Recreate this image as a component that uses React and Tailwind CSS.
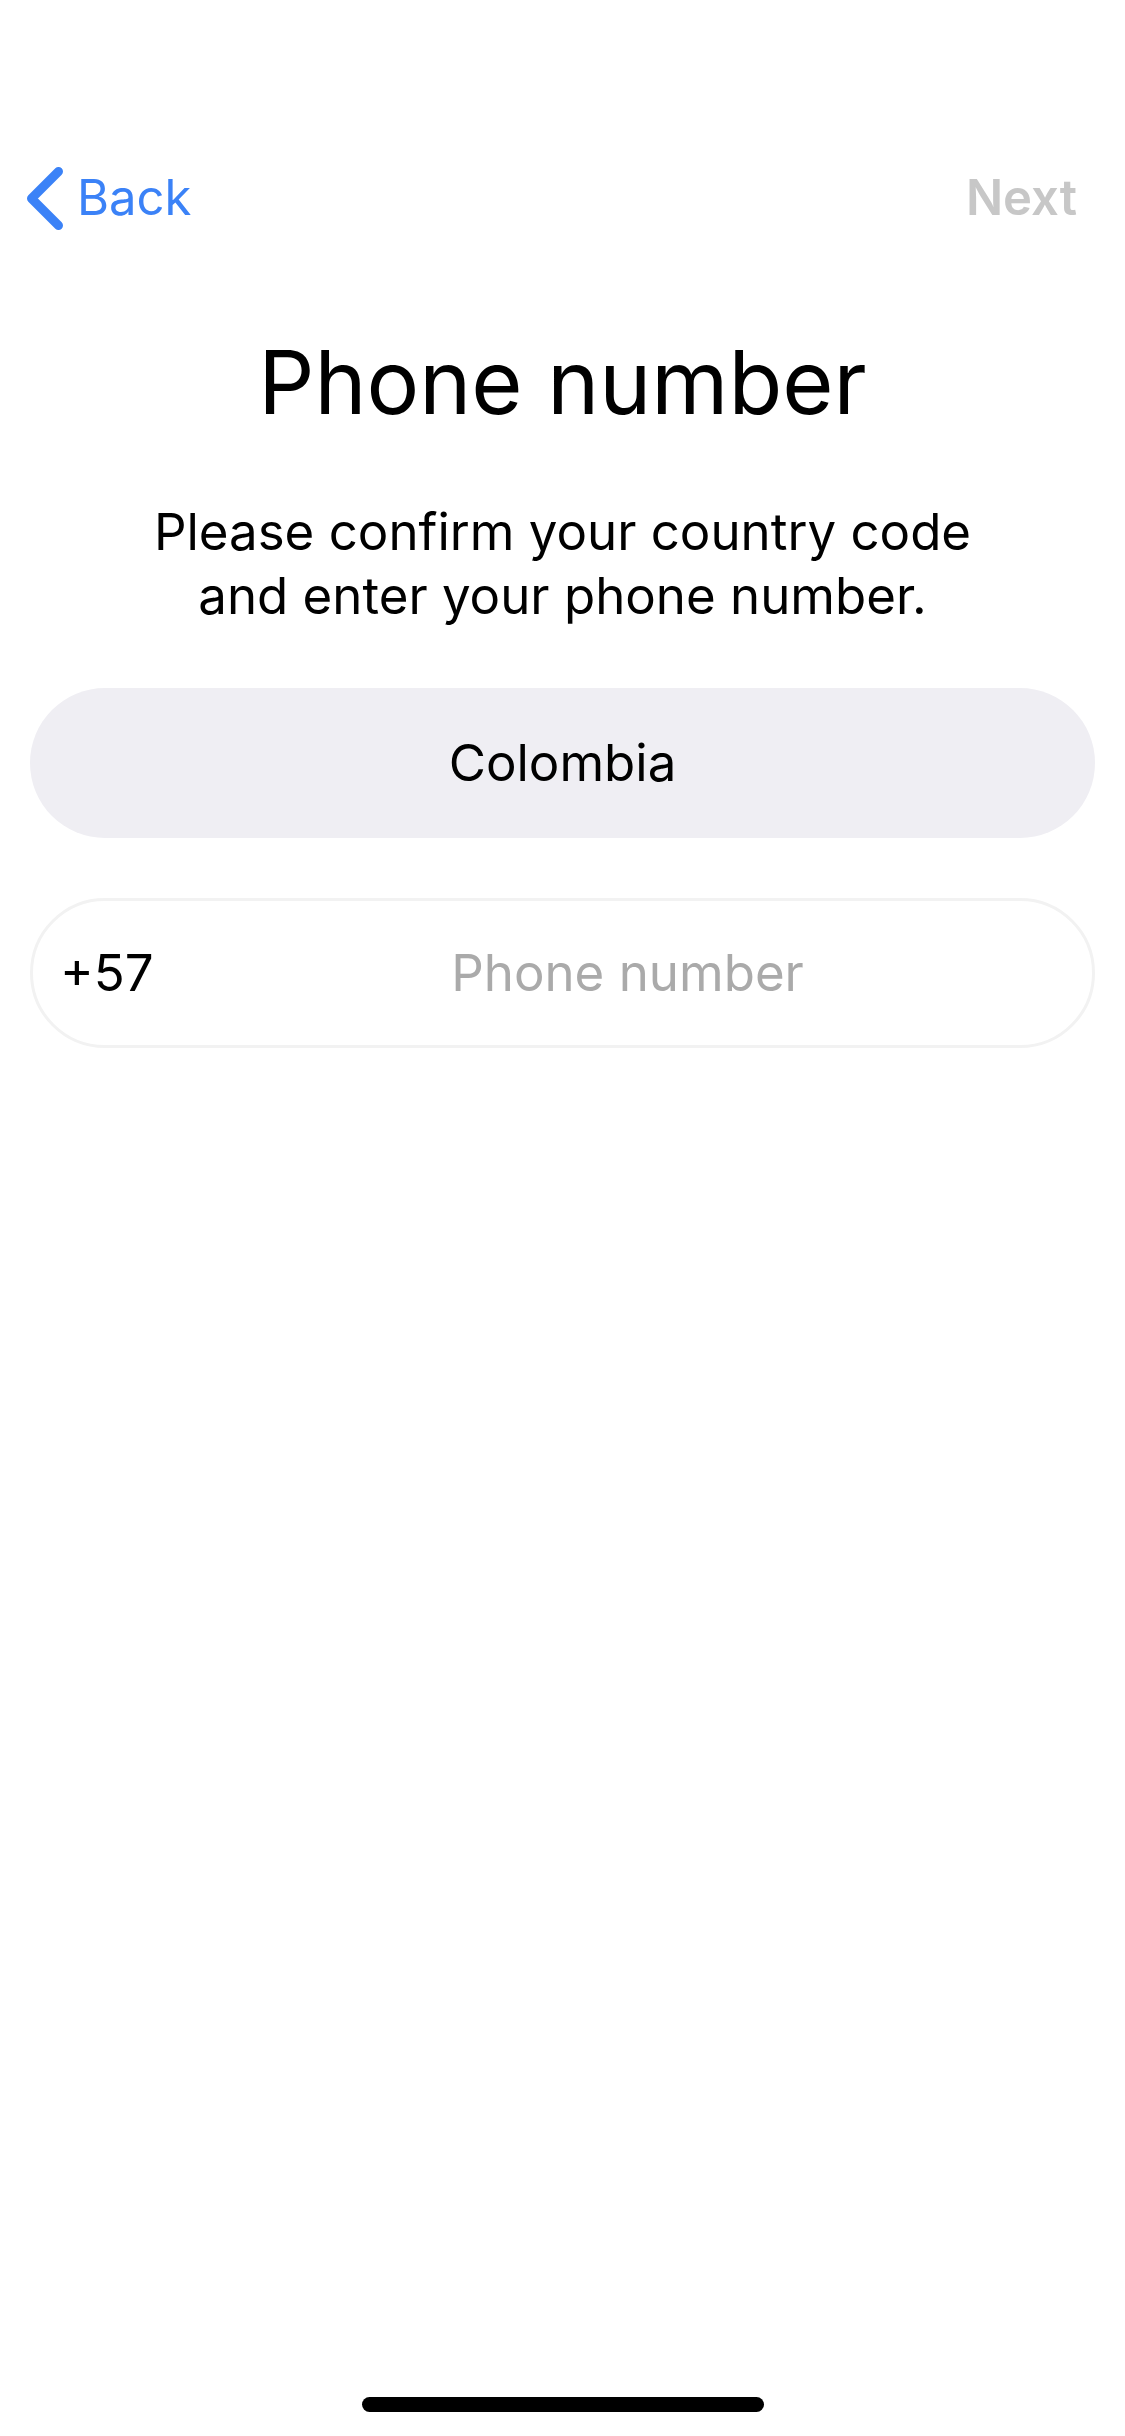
import React from "react";

export default function App() {
  return (
    <div className="flex min-h-screen flex-col bg-white font-['Inter','Liberation_Sans',sans-serif] text-black">
      <header className="mt-[132px] flex h-[132px] items-center justify-between pr-12 pl-6">
        <button type="button" className="flex items-center gap-[11px] text-[49px] leading-[60px] text-[#3b82f7]">
          <svg viewBox="0 0 42 66" className="h-[66px] w-[42px]" fill="none" stroke="currentColor" strokeWidth="9" strokeLinecap="round" strokeLinejoin="round" aria-hidden="true">
            <path d="M34.5 6.5 L7.5 33.5 L34.5 60.5" />
          </svg>
          Back
        </button>
        <button type="button" disabled className="text-[49px] leading-[60px] font-semibold text-[#c7c7c7]">
          Next
        </button>
      </header>

      <main className="flex flex-col px-[30px]">
        <h1 className="mt-[60px] text-center text-[88px] leading-[116px]">Phone number</h1>
        <p className="mt-[60px] text-center text-[51px] leading-16">
          Please confirm your country code
          <br />
          and enter your phone number.
        </p>

        <form className="mt-[60px] flex flex-col gap-[60px] text-[51px] leading-16">
          <button type="button" className="h-[150px] rounded-full bg-[#efeef3]">
            Colombia
          </button>
          <div className="flex h-[150px] items-center rounded-full border-3 border-[#f2f2f2] px-[27px]">
            <label htmlFor="phone" className="w-[130px]">
              +57
            </label>
            <input
              id="phone"
              type="tel"
              placeholder="Phone number"
              className="min-w-0 flex-1 bg-transparent text-center outline-none placeholder:text-[#aaaaaa]"
            />
          </div>
        </form>
      </main>

      <div className="mx-auto mt-auto mb-6 h-[15px] w-[402px] rounded-full bg-black" />
    </div>
  );
}
